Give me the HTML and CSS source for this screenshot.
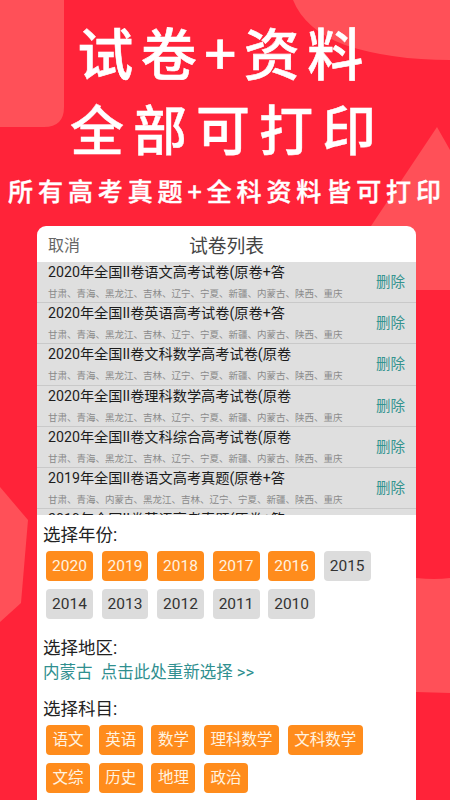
FILE: index.html
```html
<!DOCTYPE html>
<html lang="zh">
<head>
<meta charset="utf-8">
<title>试卷+资料</title>
<link rel="stylesheet" href="styles.css">
</head>
<body>
<main class="screen">
  <svg class="backdrop" viewBox="0 0 450 800" aria-hidden="true">
    <path d="M0 0H64V107Q64 127 44 127H0Z"/>
    <path d="M293 0H450V60Q390 60 345 45Q305 30 293 0Z"/>
    <path d="M437 127L450 150V290H371V226Z"/>
    <path d="M416 578Q435 580 450 578V693L416 692Z"/>
    <path d="M0 487L28 520L21 603L0 622Z"/>
  </svg>
  <header class="hero">
    <h1 class="hero-a">试卷+资料</h1>
    <h2 class="hero-b">全部可打印</h2>
    <p class="hero-c">所有高考真题+全科资料皆可打印</p>
  </header>
  <section class="card">
    <div class="card-head">
      <span class="cancel">取消</span>
      <span class="card-title">试卷列表</span>
    </div>
    <div class="list">
      <div class="row"><div class="row-text"><div class="row-name">2020年全国II卷语文高考试卷(原卷+答</div><div class="row-sub">甘肃、青海、黑龙江、吉林、辽宁、宁夏、新疆、内蒙古、陕西、重庆</div></div><span class="del">删除</span></div>
      <div class="row"><div class="row-text"><div class="row-name">2020年全国II卷英语高考试卷(原卷+答</div><div class="row-sub">甘肃、青海、黑龙江、吉林、辽宁、宁夏、新疆、内蒙古、陕西、重庆</div></div><span class="del">删除</span></div>
      <div class="row"><div class="row-text"><div class="row-name">2020年全国II卷文科数学高考试卷(原卷</div><div class="row-sub">甘肃、青海、黑龙江、吉林、辽宁、宁夏、新疆、内蒙古、陕西、重庆</div></div><span class="del">删除</span></div>
      <div class="row"><div class="row-text"><div class="row-name">2020年全国II卷理科数学高考试卷(原卷</div><div class="row-sub">甘肃、青海、黑龙江、吉林、辽宁、宁夏、新疆、内蒙古、陕西、重庆</div></div><span class="del">删除</span></div>
      <div class="row"><div class="row-text"><div class="row-name">2020年全国II卷文科综合高考试卷(原卷</div><div class="row-sub">甘肃、青海、黑龙江、吉林、辽宁、宁夏、新疆、内蒙古、陕西、重庆</div></div><span class="del">删除</span></div>
      <div class="row"><div class="row-text"><div class="row-name">2019年全国II卷语文高考真题(原卷+答</div><div class="row-sub">甘肃、青海、内蒙古、黑龙江、吉林、辽宁、宁夏、新疆、陕西、重庆</div></div><span class="del">删除</span></div>
      <div class="row"><div class="row-text"><div class="row-name">2019年全国II卷英语高考真题(原卷+答</div><div class="row-sub">甘肃、青海、内蒙古、黑龙江、吉林、辽宁、宁夏、新疆、陕西、重庆</div></div><span class="del">删除</span></div>
    </div>
    <div class="filters">
      <div class="label first">选择年份:</div>
      <div class="tags years">
        <span class="tag on">2020</span><span class="tag on">2019</span><span class="tag on">2018</span><span class="tag on">2017</span><span class="tag on">2016</span><span class="tag">2015</span>
        <span class="tag">2014</span><span class="tag">2013</span><span class="tag">2012</span><span class="tag">2011</span><span class="tag">2010</span>
      </div>
      <div class="label region">选择地区:</div>
      <div class="pick">内蒙古&nbsp; 点击此处重新选择 &gt;&gt;</div>
      <div class="label subject">选择科目:</div>
      <div class="tags">
        <span class="tag on">语文</span><span class="tag on">英语</span><span class="tag on">数学</span><span class="tag on">理科数学</span><span class="tag on">文科数学</span>
        <span class="tag on">文综</span><span class="tag on">历史</span><span class="tag on">地理</span><span class="tag on">政治</span>
      </div>
    </div>
  </section>
</main>
</body>
</html>
```
FILE: styles.css
```css
* { box-sizing: border-box; }
html, body { margin: 0; padding: 0; }
body { font-family: Roboto, "Noto Sans CJK SC", sans-serif; }
.screen {
  position: relative;
  width: 450px;
  height: 800px;
  overflow: hidden;
  background: #ff2339;
  display: flex;
  flex-direction: column;
}
.backdrop { position: absolute; inset: 0; width: 450px; height: 800px; fill: #ff5058; }
.hero { position: relative; color: #fff; text-align: center; font-family: "Noto Sans CJK SC", sans-serif; height: 226px; flex: none; padding-top: 18px; }
.hero-a { margin: 0; font-size: 56px; line-height: 66px; font-weight: 500; -webkit-text-stroke: 0.6px #fff; letter-spacing: 7.5px; padding-right: 2px; white-space: nowrap; }
.hero-b { margin: 12px 0 0; font-size: 54px; line-height: 64px; font-weight: 500; -webkit-text-stroke: 0.4px #fff; letter-spacing: 9px; padding-left: 5px; white-space: nowrap; }
.hero-c { margin: 14px 0 0; font-size: 25px; line-height: 32px; font-weight: 500; -webkit-text-stroke: 0.4px #fff; letter-spacing: 4.9px; white-space: nowrap; padding-left: 4px; }
.card {
  position: relative;
  margin-left: 37px;
  width: 379px;
  flex: 1;
  min-height: 0;
  background: #fff;
  border-radius: 9px 9px 0 0;
  overflow: hidden;
}
.card-head { height: 36px; display: flex; align-items: center; justify-content: center; position: relative; color: #444; }
.cancel { position: absolute; left: 11px; font-size: 16px; color: #666; }
.card-title { font-size: 18.8px; }
.list { height: 253px; overflow: hidden; background: #dfdfdf; }
.row { height: 41.2px; display: flex; align-items: center; padding: 0 11px; border-bottom: 1px solid #c9c9c9; }
.row-text { flex: 1; min-width: 0; }
.row-name { font-size: 14.2px; line-height: 20px; height: 20px; color: #1c1c1c; margin-top: -1px; white-space: nowrap; }
.row-sub { font-size: 9.5px; line-height: 14px; margin-top: 5px; color: #8a8a8a; white-space: nowrap; }
.del { font-size: 14.5px; color: #35948f; margin-top: -3px; }
.filters { padding: 0 6px; }
.label { font-size: 17.5px; line-height: 22px; color: #222; }
.label.first { margin-top: 9px; }
.label.region { margin-top: 18px; }
.label.subject { margin-top: 14px; }
.tags { display: flex; flex-wrap: wrap; gap: 8px 8.7px; padding: 5px 3px 0; }
.tag { height: 30px; padding: 0 6.5px; border-radius: 4px; background: #dcdcdc; color: #333; font-size: 15.5px; line-height: 30px; }
.years .tag { padding: 0 6px; }
.tag.on { background: #ff8c1c; color: #fff3e0; }
.pick { font-size: 16.5px; line-height: 22px; color: #2f8f8f; margin-top: 3px; white-space: nowrap; }
```
